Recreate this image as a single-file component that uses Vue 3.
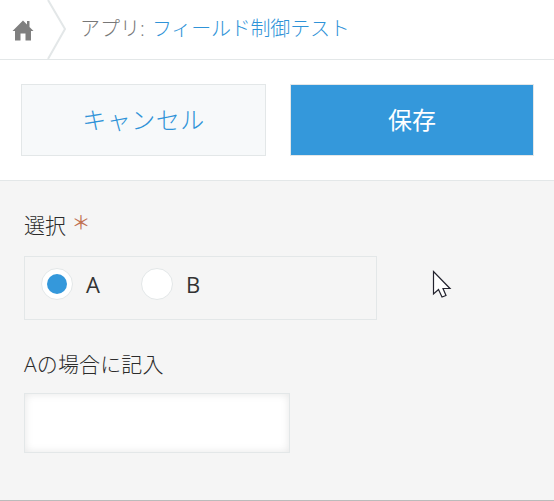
<template>
  <div class="page">
    <!-- Header with breadcrumb -->
    <header class="header">
      <a class="home">
        <svg width="22" height="22" viewBox="0 0 22 22">
          <path d="M11 1.5 L0.5 12 L3 12 L3 21.5 L8.5 21.5 L8.5 14.5 L13.5 14.5 L13.5 21.5 L19 21.5 L19 12 L21.5 12 L17.5 8 L17.5 2 L15 2 L15 5.5 Z" fill="#7f7f7f" />
        </svg>
      </a>
      <svg class="chevron" width="20" height="59" viewBox="0 0 20 59">
        <path d="M1 0 L18 29 L1 59" fill="none" stroke="#e3e7e8" stroke-width="2" />
      </svg>
      <div class="crumb">
        <span class="crumb-label">アプリ: </span><span class="crumb-link">フィールド制御テスト</span>
      </div>
    </header>

    <!-- Action buttons -->
    <div class="toolbar">
      <button class="btn btn-cancel" type="button">キャンセル</button>
      <button class="btn btn-save" type="button">保存</button>
    </div>

    <!-- Form -->
    <main class="form">
      <div class="label">選択 <span class="required">＊</span></div>
      <div class="radio-box">
        <label v-for="opt in options" :key="opt" class="radio">
          <span class="radio-circle">
            <span v-if="opt === selected" class="radio-dot"></span>
          </span>
          <span class="radio-text">{{ opt }}</span>
        </label>
      </div>

      <div class="label label-second">Aの場合に記入</div>
      <div class="input"></div>

      <svg class="cursor" width="20" height="30" viewBox="0 0 20 30">
        <path d="M1.5 1.5 L1.5 24 L6.5 19.5 L10 27 L14 25.5 L11 18.5 L18 18.5 Z" fill="#fff" stroke="#23232e" stroke-width="1.2" />
      </svg>
    </main>
  </div>
</template>

<script setup>
import { ref } from 'vue';

const options = ['A', 'B'];
const selected = ref('A');
</script>

<style>
html, body {
  margin: 0;
  background: #fff;
}
</style>

<style scoped>
.page {
  width: 554px;
  height: 501px;
  display: flex;
  flex-direction: column;
  font-family: "Open Sans", "Noto Sans CJK JP", sans-serif;
  font-weight: 300;
  overflow: hidden;
}

.header {
  height: 59px;
  border-bottom: 1px solid #e3e7e8;
  display: flex;
  align-items: center;
  flex: none;
}

.home {
  width: 47px;
  height: 22px;
  padding-left: 12px;
  box-sizing: border-box;
}

.chevron {
  flex: none;
}

.crumb {
  margin-left: 13px;
  padding-bottom: 4px;
  font-size: 20px;
  color: #777;
  white-space: pre;
}

.crumb-link {
  margin-left: 2px;
  letter-spacing: -0.2px;
  color: #2f93d8;
}

.toolbar {
  height: 121px;
  box-sizing: border-box;
  border-bottom: 1px solid #e3e7e8;
  padding: 24px 20px 24px 21px;
  display: flex;
  gap: 24px;
  flex: none;
}

.btn {
  height: 72px;
  font-family: inherit;
  font-weight: 300;
  font-size: 24px;
  border: 1px solid #e3e7e8;
  padding: 0 0 4px;
}

.btn-cancel {
  width: 245px;
  background: #f7f9fa;
  color: #2f93d8;
  letter-spacing: 0.5px;
}

.btn-save {
  width: 244px;
  background: #3498db;
  color: #fff;
  font-weight: 400;
}

.form {
  position: relative;
  flex: 1;
  background: #f5f5f5;
  padding: 29px 24px 0;
  border-bottom: 1px solid #bbb;
  box-sizing: border-box;
}

.label {
  font-size: 21px;
  line-height: 30px;
  color: #2b2b2b;
}

.label-second {
  margin-top: 29px;
  letter-spacing: 0.15px;
}

.required {
  color: #c07050;
  font-size: 19px;
  font-weight: 400;
  line-height: 20px;
  vertical-align: 3px;
  margin-left: 0;
}

.radio-box {
  margin-top: 16px;
  width: 353px;
  height: 64px;
  box-sizing: border-box;
  border: 1px solid #e3e7e8;
  padding: 0 0 8px 16px;
  display: flex;
  align-items: center;
  gap: 41px;
}

.radio {
  display: flex;
  align-items: center;
  gap: 13px;
}

.radio-circle {
  width: 32px;
  height: 32px;
  box-sizing: border-box;
  border: 1px solid #e3e7e8;
  border-radius: 50%;
  background: #fff;
  display: flex;
  align-items: center;
  justify-content: center;
}

.radio-dot {
  width: 20px;
  height: 20px;
  border-radius: 50%;
  background: #3498db;
}

.radio-text {
  font-size: 22px;
  font-weight: 400;
  color: #333;
  width: 14px;
}

.input {
  margin-top: 14px;
  width: 266px;
  height: 60px;
  box-sizing: border-box;
  border: 1px solid #e3e7e8;
  background: #fff;
  box-shadow: inset 0 0 8px rgba(0, 0, 0, 0.1);
}

.cursor {
  position: absolute;
  left: 432px;
  top: 89px;
}
</style>
